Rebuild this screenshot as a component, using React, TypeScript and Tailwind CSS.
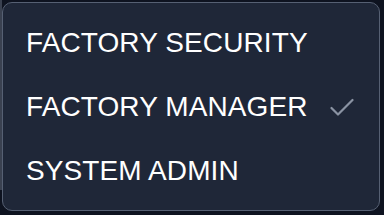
import React from "react";

const items = [
  { label: "FACTORY SECURITY", checked: false },
  { label: "FACTORY MANAGER", checked: true },
  { label: "SYSTEM ADMIN", checked: false },
];

export default function App() {
  return (
    <div className="w-[384px] h-[215px] bg-[#0e1320] flex overflow-hidden">
      <div className="w-[2px] h-[190px] bg-[#3a4150]" />
      <div className="flex flex-col">
        <div className="h-[2px]" />
        <div
          className="w-[378px] h-[209px] rounded-[10px] border border-[#566073] bg-[#1f2738] pt-[7.5px] flex flex-col"
          style={{ fontFamily: '"Liberation Sans", Arial, sans-serif' }}
        >
          {items.map((it) => (
            <div key={it.label} className="h-[64px] flex items-center pl-[23px] pr-[25px]">
              <span className="text-[28px] tracking-[0.1px] leading-[32px] text-white flex-1">{it.label}</span>
              {it.checked && (
                <svg width="24" height="18" viewBox="0 0 24 18" fill="none">
                  <path
                    d="M1.5 10 L8 16.5 L22.5 2"
                    stroke="#8a93a3"
                    strokeWidth="2.2"
                    strokeLinecap="round"
                    strokeLinejoin="round"
                  />
                </svg>
              )}
            </div>
          ))}
        </div>
      </div>
    </div>
  );
}
